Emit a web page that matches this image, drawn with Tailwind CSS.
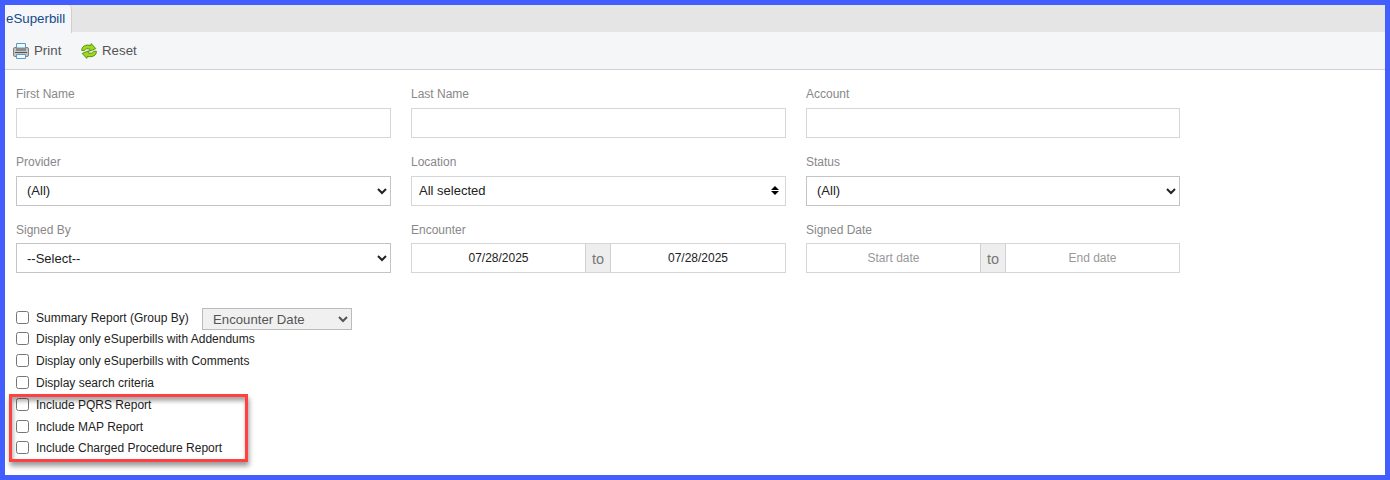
<!DOCTYPE html>
<html lang="en">
  <head>
    <meta charset="UTF-8" />
    <meta name="viewport" content="width=device-width, initial-scale=1.0" />
    <title>eSuperbill</title>
    <script src="https://cdn.jsdelivr.net/npm/@tailwindcss/browser@4"></script>
  </head>
  <body class="h-[480px] overflow-hidden border-5 border-[#435eff] bg-white font-['Liberation_Sans',Arial,sans-serif] text-xs text-[#222]">
    <!-- Tabs -->
    <nav class="flex h-[27px] bg-[#e5e5e5]">
      <a href="#" class="h-7 w-[67px] rounded-tr-[4px] border-r border-[#cfcfcf] bg-[#f4f6f9] pl-px text-[13.3px] leading-[28px] whitespace-nowrap text-[#154a8b]">eSuperbill</a>
    </nav>

    <!-- Toolbar -->
    <header class="flex h-[38px] items-center border-b border-[#d0d0d0] bg-[#f4f6f8] pl-2 text-[13.3px] text-[#555]">
      <button class="flex w-[68px] items-center gap-[5px]">
        <svg class="size-4" viewBox="0 0 16 16">
          <rect x=".5" y="4.500" width="15" height="9" rx="1.500" fill="#c4c4c4" stroke="#808080" />
          <path d="M3.500.5h9V5h-9z" fill="#f2f9fe" stroke="#5b9bc6" />
          <path d="M3 5h10v3H3z" fill="#8c8c8c" />
          <path d="M2 9.500h12" stroke="#555" />
          <path d="M3.500 11.500h9v4h-9z" fill="#f2f9fe" stroke="#5b9bc6" />
        </svg>
        <span>Print</span>
      </button>
      <button class="flex items-center gap-[5px]">
        <svg class="size-4" viewBox="0 0 16 16" fill="#a2d81a" stroke="#4c8a10" stroke-width=".9" stroke-linejoin="round">
          <path d="M.8 7.500C.5 3.500 4.500 1 9.800 2.500l.4-1.900 4.600 5L8.500 8.200l.4-2C6.500 5.200 4.300 5.700 3.500 7.600z" />
          <path d="M15.400 8.200c.3 4-3.700 6.500-9.200 5.200l-.4 2-4.600-5 6.300-2.600-.4 2c2.600 1 4.600.4 5.300-1.500z" />
        </svg>
        <span>Reset</span>
      </button>
    </header>

    <!-- Search filters -->
    <main class="px-[11px] pt-[14px]">
      <section class="grid grid-cols-[375px_375px_374px] gap-x-5 text-[#888]">
        <div class="h-[68px]">
          <label for="first-name" class="block h-6 leading-5">First Name</label>
          <input id="first-name" type="text" class="block h-[30px] w-full border border-[#d6d6d6]" />
        </div>
        <div class="h-[68px]">
          <label for="last-name" class="block h-6 leading-5">Last Name</label>
          <input id="last-name" type="text" class="block h-[30px] w-full border border-[#d6d6d6]" />
        </div>
        <div class="h-[68px]">
          <label for="account" class="block h-6 leading-5">Account</label>
          <input id="account" type="text" class="block h-[30px] w-full border border-[#d6d6d6]" />
        </div>

        <div class="h-[68px]">
          <label for="provider" class="block h-6 leading-5">Provider</label>
          <select id="provider" class="block h-[30px] w-full border border-[#c4c4c4] px-[6px] pb-[2px] text-[13px] text-[#222]">
            <option>(All)</option>
          </select>
        </div>
        <div class="h-[68px]">
          <label class="block h-6 leading-5">Location</label>
          <button class="flex h-[30px] w-full items-center justify-between border border-[#d6d6d6] pr-[6px] pb-px pl-[7px] text-[13px] text-[#222]">
            <span>All selected</span>
            <svg class="h-[9px] w-2" viewBox="0 0 8 9" fill="#000"><path d="M4 0l4 4H0zM0 5h8L4 9z" /></svg>
          </button>
        </div>
        <div class="h-[68px]">
          <label for="status" class="block h-6 leading-5">Status</label>
          <select id="status" class="block h-[30px] w-full border border-[#c4c4c4] px-[6px] pb-[2px] text-[13px] text-[#222]">
            <option>(All)</option>
          </select>
        </div>

        <div>
          <label for="signed-by" class="block h-[23px] leading-5">Signed By</label>
          <select id="signed-by" class="block h-[30px] w-full border border-[#c4c4c4] px-[6px] text-[13px] text-[#222]">
            <option>--Select--</option>
          </select>
        </div>
        <div>
          <label class="block h-[23px] leading-5">Encounter</label>
          <div class="flex h-[30px] border border-[#d6d6d6]">
            <input type="text" value="07/28/2025" class="w-[173px] text-center text-[#222]" />
            <span class="w-[26px] border-x border-[#d0d0d0] bg-[#eee] text-center text-[14.5px] leading-[30px] text-[#777]">to</span>
            <input type="text" value="07/28/2025" class="w-[174px] text-center text-[#222]" />
          </div>
        </div>
        <div>
          <label class="block h-[23px] leading-5">Signed Date</label>
          <div class="flex h-[30px] border border-[#d6d6d6]">
            <input type="text" placeholder="Start date" class="w-[173px] text-center placeholder:text-[#999]" />
            <span class="w-[26px] border-x border-[#d0d0d0] bg-[#eee] text-center text-[14.5px] leading-[30px] text-[#777]">to</span>
            <input type="text" placeholder="End date" class="w-[173px] text-center placeholder:text-[#999]" />
          </div>
        </div>
      </section>

      <!-- Report options -->
      <section class="mt-[34px]">
        <div class="flex h-[21px] items-center">
          <label class="flex w-[186px] items-center gap-[7px]"><input type="checkbox" class="size-[13px]" />Summary Report (Group By)</label>
          <select disabled class="mt-[3px] h-[22px] w-[150px] border border-[#bbb] bg-[#f0f0f0] px-[6px] text-[13.2px] text-[#555]">
            <option>Encounter Date</option>
          </select>
        </div>
        <label class="flex h-[22px] items-center gap-[7px]"><input type="checkbox" class="mb-[2px] size-[13px]" />Display only eSuperbills with Addendums</label>
        <label class="flex h-[22px] items-center gap-[7px]"><input type="checkbox" class="mb-[2px] size-[13px]" />Display only eSuperbills with Comments</label>
        <label class="flex h-[22px] items-center gap-[7px]"><input type="checkbox" class="mb-[2px] size-[13px]" />Display search criteria</label>
        <div class="relative">
          <label class="flex h-[22px] items-center gap-[7px]"><input type="checkbox" class="mb-[2px] size-[13px]" />Include PQRS Report</label>
          <label class="flex h-[22px] items-center gap-[7px]"><input type="checkbox" class="mb-[2px] size-[13px]" />Include MAP Report</label>
          <label class="-mt-px flex h-[22px] items-center gap-[7px]"><input type="checkbox" class="mb-px size-[13px]" />Include Charged Procedure Report</label>
          <!-- Highlight over the last three options -->
          <div class="pointer-events-none absolute top-0 -left-[7px] h-[68px] w-[239px] border-3 border-[#ff4141] shadow-[1px_4px_5px_rgba(0,0,0,0.4),inset_1px_4px_4px_rgba(0,0,0,0.35)]"></div>
        </div>
      </section>
    </main>
  </body>
</html>
